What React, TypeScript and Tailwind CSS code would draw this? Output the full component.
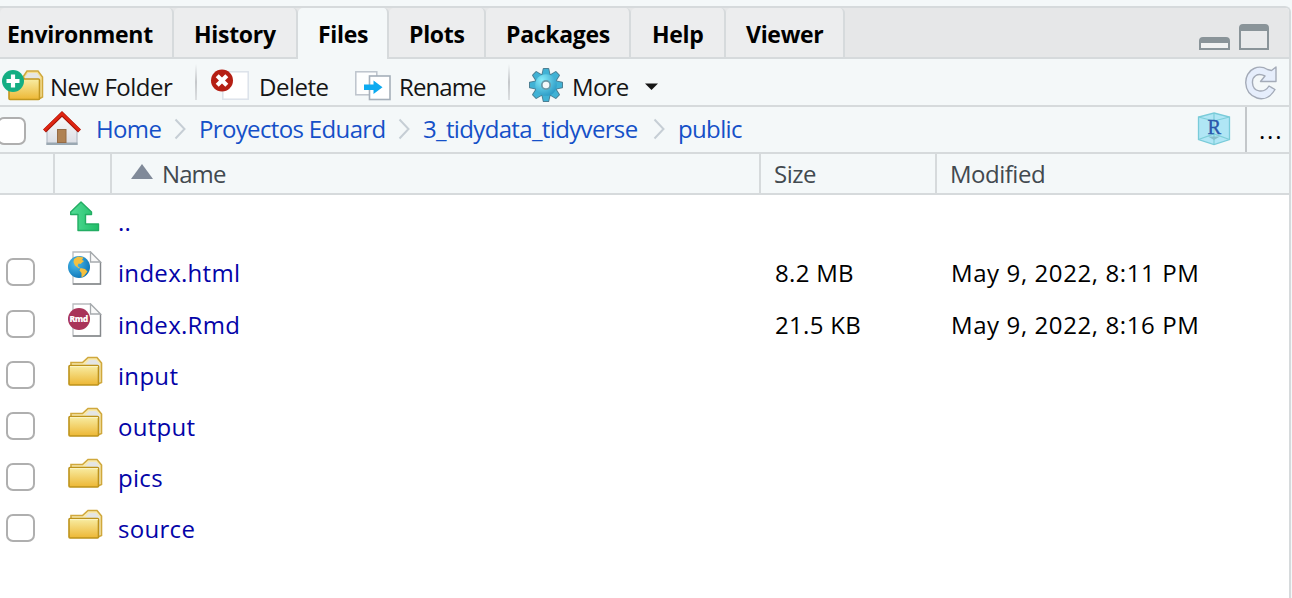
import React from "react";

function Folder({ className }: { className?: string }) {
  return (
    <svg className={className} width="35" height="31" viewBox="0 0 35 31">
      <defs>
        <linearGradient id="fold" x1="0" y1="0" x2="0" y2="1">
          <stop offset="0" stopColor="#f8eda4" />
          <stop offset="1" stopColor="#edb734" />
        </linearGradient>
      </defs>
      <path d="M3 27V6.500H14.500L20 1.500H29L33.500 7V26.500L30 28Z" fill="#f7e9ae" stroke="#d0a83c" strokeWidth="1.600" />
      <path d="M17 8.500L21 4H28L31.500 8V26H30V9Z" fill="#e4e5e4" />
      <rect x="1" y="9.500" width="29.500" height="19.500" rx="1" fill="url(#fold)" stroke="#bd931b" strokeWidth="1.600" />
      <path d="M2 10.600H30" stroke="#fdf6c8" />
    </svg>
  );
}

function NewFolderIcon() {
  return (
    <svg width="44" height="34" viewBox="0 0 44 34">
      <path d="M23 9L27 3H38L42.500 9V29L39 31Z" fill="#f5df94" stroke="#d0a83c" strokeWidth="1.500" />
      <path d="M25 9L28 5H37L40 9V14H25Z" fill="#e6e6e2" />
      <rect x="9" y="11" width="30.500" height="20.500" rx="1" fill="url(#fold)" stroke="#c2971f" strokeWidth="1.600" />
      <circle cx="13" cy="13" r="11" fill="#14ae83" />
      <path d="M13 6.500V19.500M6.500 13H19.500" stroke="#fff" strokeWidth="4.200" />
    </svg>
  );
}

function DeleteIcon() {
  return (
    <svg width="40" height="34" viewBox="0 0 40 34">
      <rect x="12.800" y="4.800" width="25.400" height="27.400" fill="#fff" stroke="#dce2ea" strokeWidth="1.500" />
      <circle cx="12" cy="13.500" r="11" fill="#b51f14" />
      <path d="M7.200 8.700L16.800 18.300M16.800 8.700L7.200 18.300" stroke="#fff" strokeWidth="4.200" />
    </svg>
  );
}

function RenameIcon() {
  return (
    <svg width="36" height="32" viewBox="0 0 36 32">
      <rect x="0.800" y="1.800" width="21" height="23" fill="#fdfefe" stroke="#bdc4cc" strokeWidth="1.500" />
      <rect x="14.500" y="6" width="20.500" height="23.500" fill="#fff" stroke="#a5afba" strokeWidth="1.600" />
      <path d="M9 14.500H18.500V10.500L27.500 17.300L18.500 24V20H9Z" fill="#0caaf0" />
    </svg>
  );
}

const TEETH = [0, 45, 90, 135, 180, 225, 270, 315];

function Gear() {
  return (
    <svg width="38" height="38" viewBox="-19 -19 38 38">
      <defs>
        <radialGradient id="gear" gradientUnits="userSpaceOnUse" cx="-4" cy="-5" r="18">
          <stop offset="0" stopColor="#86ecfa" />
          <stop offset="1" stopColor="#2796c3" />
        </radialGradient>
      </defs>
      <g stroke="#4d7f93" strokeWidth="1.600" strokeLinejoin="round">
        {TEETH.map((a) => (
          <path key={a} transform={`rotate(${a})`} d="M-4.300 -8L-2.400 -16.200H2.400L4.300 -8Z" fill="#35a9cf" />
        ))}
        <circle r="10.600" />
      </g>
      {TEETH.map((a) => (
        <path key={a} transform={`rotate(${a})`} d="M-4.200 -8L-2.300 -16H2.300L4.200 -8Z" fill="#40b2d5" />
      ))}
      <circle r="10.800" fill="url(#gear)" />
      <circle r="4.200" fill="#f4f8f9" stroke="#6899a8" strokeWidth="1.800" />
    </svg>
  );
}

function House() {
  return (
    <svg width="38" height="36" viewBox="0 0 38 36">
      <defs>
        <linearGradient id="wall" x1="0" y1="0" x2="0" y2="1">
          <stop offset="0" stopColor="#fafafa" />
          <stop offset="1" stopColor="#dadde4" />
        </linearGradient>
      </defs>
      <path d="M4 17L19 4L34 17V33.500H4Z" fill="url(#wall)" stroke="#b4bdc6" strokeWidth="1.200" />
      <path d="M3.500 32.800H34.500" stroke="#9aa8b2" strokeWidth="2.400" />
      <rect x="14.500" y="18.500" width="8.500" height="13" fill="#b08253" stroke="#966b45" />
      <path d="M1.500 20L19 3L36.500 20" fill="none" stroke="#a31206" strokeWidth="4.200" />
      <path d="M1.500 19.500L19 2.600L36.500 19.500" fill="none" stroke="#df2512" strokeWidth="2.800" />
    </svg>
  );
}

function Chevron() {
  return (
    <svg width="13" height="22" viewBox="0 0 13 22">
      <path d="M1.500 1.500L10.500 11L1.500 20.500" fill="none" stroke="#c6ced5" strokeWidth="2" />
    </svg>
  );
}

function Refresh() {
  return (
    <svg width="34" height="36" viewBox="0 0 34 36">
      <path
        d="M23.500 4.500L27.500 5.500L32 2V16.500H16.500L21 11C13 7 8 12 8.500 18C9 27 20 29 25 21L31 24.500C26 33 19 35 13 33C-2 28 -1 8 10 3.500C14.500 1.500 19.500 2 23.500 4.500Z"
        fill="#e6eefc" stroke="#a4abb8" strokeWidth="1.400" strokeLinejoin="round"
      />
    </svg>
  );
}

function RCube() {
  return (
    <svg width="34" height="34" viewBox="0 0 34 34">
      <path d="M17 1L32.500 5V27.500L17 32.500L1.500 27.500V5Z" fill="#b0e6f5" stroke="#79cbd9" strokeWidth="1.300" />
      <path d="M1.500 5L17 9L32.500 5M17 1V32M1.500 27.500L17 22L32.500 27.500" fill="none" stroke="#7dced8" strokeWidth="1.200" />
      <path d="M11 24.500H23L17 28Z" fill="#88bfcb" />
      <text x="17" y="21.500" textAnchor="middle" fontFamily="Liberation Serif, serif" fontSize="22" fill="#2a58ac" stroke="#2a58ac" strokeWidth="0.400" textLength="13" lengthAdjust="spacingAndGlyphs">R</text>
    </svg>
  );
}

function Page() {
  return (
    <>
      <path d="M5 1H22.500L32.500 11V33H5Z" fill="#fff" stroke="#b9bcbf" strokeWidth="1.300" />
      <path d="M5 33H32.500V11" fill="none" stroke="#85888b" strokeWidth="1.300" />
      <path d="M22.500 1V11H32.500Z" fill="#fafafa" stroke="#a7abae" strokeWidth="1.300" />
    </>
  );
}

function HtmlIcon() {
  return (
    <svg width="35" height="35" viewBox="0 0 35 35">
      <defs>
        <radialGradient id="globe" cx=".35" cy=".35" r=".75">
          <stop offset="0" stopColor="#4dbdec" />
          <stop offset="1" stopColor="#0870b4" />
        </radialGradient>
      </defs>
      <Page />
      <circle cx="11" cy="16" r="11" fill="url(#globe)" />
      <path d="M6 8L10 5.500L15.500 6.500L14 9L16 10L12.500 13L10.500 12.500L9.500 15L12 17L11 17.500L7 14.500L5.500 11Z" fill="#f4c03f" />
      <path d="M12.500 17L17 18L19.500 20.500L16 25L13.500 26.500V22L11.500 19.500Z" fill="#f4c03f" />
    </svg>
  );
}

function RmdIcon() {
  return (
    <svg width="35" height="35" viewBox="0 0 35 35">
      <Page />
      <circle cx="11" cy="16" r="11" fill="#a93459" />
      <text x="11" y="19" textAnchor="middle" fontFamily="Open Sans, sans-serif" fontWeight="800" fontSize="8.500" textLength="19" fill="#fff">Rmd</text>
    </svg>
  );
}

function UpIcon() {
  return (
    <svg width="35" height="35" viewBox="0 0 35 35">
      <defs>
        <linearGradient id="up" x1="0" x2="1">
          <stop offset="0" stopColor="#53dc96" />
          <stop offset="1" stopColor="#20bd67" />
        </linearGradient>
      </defs>
      <path d="M13 3L23.500 13V15.500H17.500V25H30.500V31.500H10V15.500H2.700V13Z" fill="url(#up)" stroke="#23ad63" strokeWidth="1.400" strokeLinejoin="round" />
    </svg>
  );
}

const tabs = [
  { label: "Environment", box: "w-[174px] pl-[7px]" },
  { label: "History", box: "w-[124px] pl-5" },
  { label: "Files", box: "w-[91px] pl-5", active: true },
  { label: "Plots", box: "w-[97px] pl-5" },
  { label: "Packages", box: "w-[145px] pl-5" },
  { label: "Help", box: "w-[95px] pl-[21px]" },
  { label: "Viewer", box: "w-[119px] pl-5" },
];

const files = [
  { name: "..", icon: <UpIcon />, row: "h-[51px]", pad: "pb-[8px]", up: true },
  { name: "index.html", icon: <HtmlIcon />, row: "h-[52px]", pad: "pb-[8px]", size: "8.2 MB", date: "May 9, 2022, 8:11 PM" },
  { name: "index.Rmd", icon: <RmdIcon />, row: "h-[52px] -mb-px", pad: "pb-[8px]", size: "21.5 KB", date: "May 9, 2022, 8:16 PM" },
  { name: "input", icon: <Folder />, row: "h-[51px]", pad: "pb-[6px]" },
  { name: "output", icon: <Folder />, row: "h-[51px]", pad: "pb-[6px]" },
  { name: "pics", icon: <Folder />, row: "h-[51px]", pad: "pb-[6px]" },
  { name: "source", icon: <Folder />, row: "h-[51px]", pad: "pb-[6px]" },
];

function Divider() {
  return <div className="h-9 w-[2px] bg-linear-to-b from-[#f4f8f9] via-[#c5c8cb] to-[#dde0e2]" />;
}

export default function App() {
  return (
    <div className="h-[598px] w-[1292px] overflow-hidden bg-[#f4f8f9] pt-[6px] font-['Open_Sans',sans-serif] text-[24px] whitespace-nowrap text-[#151515]">
      <div className="flex h-[592px] w-[1291px] flex-col overflow-hidden rounded-tr-[6px] border-t-2 border-r-2 border-[#d6dadc] bg-white">
        <div className="flex h-[51px] shrink-0 bg-[#e6e7e8]">
          {tabs.map((t) => (
            <div
              key={t.label}
              className={`flex shrink-0 items-center rounded-t-[5px] border-r-2 border-[#d6dadc] text-[23px] font-bold tracking-[-0.3px] text-black ${t.box} ${t.active ? "bg-[#f4f8f9] pt-[2px]" : "border-b-2 bg-[#ecedee] pt-[4px]"}`}
            >
              {t.label}
            </div>
          ))}
          <div className="flex flex-1 items-start gap-[9px] border-b-2 border-[#d6dadc] pl-[354px]">
            <div className="mt-[29px] h-[13px] w-[31px] rounded-t-[4px] border-2 border-t-[6px] border-[#8a9499] bg-[#f1f2f2]" />
            <div className="mt-4 h-[26px] w-[30px] rounded-t-[4px] border-2 border-t-[7px] border-[#8a9499] bg-[#e9eaeb]" />
          </div>
        </div>

        <div className="flex h-12 shrink-0 items-center border-b-2 border-[#d6dadc] bg-[#f4f8f9] tracking-[-0.5px]">
          <div className="flex w-[50px] pt-[6px]"><NewFolderIcon /></div>
          <div className="w-[145px] pt-[10px]">New Folder</div>
          <Divider />
          <div className="flex w-[62px] pt-[3px] pl-[13px]"><DeleteIcon /></div>
          <div className="w-[96px] pt-[10px]">Delete</div>
          <div className="flex w-[44px] pt-[8px]"><RenameIcon /></div>
          <div className="w-[109px] pt-[10px] tracking-[-0.9px]">Rename</div>
          <Divider />
          <div className="flex w-[62px] pt-[5px] pl-[17px]"><Gear /></div>
          <div className="w-[73px] pt-[10px] tracking-[-0.7px]">More</div>
          <svg className="mt-[9px]" width="13" height="7" viewBox="0 0 13 7"><path d="M0 0.500H13L6.500 7Z" fill="#151515" /></svg>
          <div className="flex flex-1 justify-end pt-[2px] pr-[11px]"><Refresh /></div>
        </div>

        <div className="flex h-[47px] shrink-0 items-center border-b-2 border-[#d6dadc] bg-[#f4f8f9] tracking-[-0.65px] text-[#1550c8]">
          <div className="mt-[2px] -ml-[3px] h-7 w-[29px] rounded-[7px] border-2 border-[#afafaf] bg-white" />
          <div className="flex w-[70px] pb-[2px] pl-[17px]"><House /></div>
          <div className="w-[78px] pb-[1px]">Home</div>
          <div className="w-[25px] pb-[2px]"><Chevron /></div>
          <div className="w-[199px] pb-[1px]">Proyectos Eduard</div>
          <div className="w-[25px] pb-[2px]"><Chevron /></div>
          <div className="w-[230px] pb-[1px]">3_tidydata_tidyverse</div>
          <div className="w-[25px] pb-[2px]"><Chevron /></div>
          <div className="flex-1 pb-[1px]">public</div>
          <div className="mr-[14px] pb-[2px]"><RCube /></div>
          <div className="h-full w-[2px] bg-[#c3c7ca]" />
          <div className="w-[42px] pl-[12px] tracking-[1.8px] text-black">...</div>
        </div>

        <div className="flex h-[41px] shrink-0 border-b-2 border-[#d6dadc] bg-[#f4f8f9] tracking-[-0.5px] text-[#42494f]">
          <div className="w-[55px] border-r-2 border-[#d6dadc]" />
          <div className="w-[57px] border-r-2 border-[#d6dadc]" />
          <div className="flex w-[649px] items-center border-r-2 border-[#d6dadc] pl-[19px]">
            <svg className="mr-[9px] -mt-1" width="22" height="15" viewBox="0 0 22 15"><path d="M0 15L11 0L22 15Z" fill="#808a99" /></svg>
            <span className="pt-[1px] tracking-[-0.9px]">Name</span>
          </div>
          <div className="flex w-[176px] items-center border-r-2 border-[#d6dadc] pt-[1px] pl-[13px]">Size</div>
          <div className="flex flex-1 items-center pt-[1px] pl-[13px]">Modified</div>
        </div>

        {files.map((f) => (
          <div key={f.name} className={`flex shrink-0 items-center tracking-[0.3px] text-black ${f.row}`}>
            <div className="w-[68px] pl-[6px]">
              {!f.up && <div className="h-7 w-[29px] rounded-[7px] border-2 border-[#afafaf] bg-white" />}
            </div>
            <div className={`flex w-[50px] ${f.pad}`}>{f.icon}</div>
            <div className="w-[657px] pt-[2px] text-[#0404a8]">{f.name}</div>
            <div className="w-[176px] pt-[2px]">{f.size}</div>
            <div className="pt-[2px] tracking-[0.6px]">{f.date}</div>
          </div>
        ))}
      </div>
    </div>
  );
}
